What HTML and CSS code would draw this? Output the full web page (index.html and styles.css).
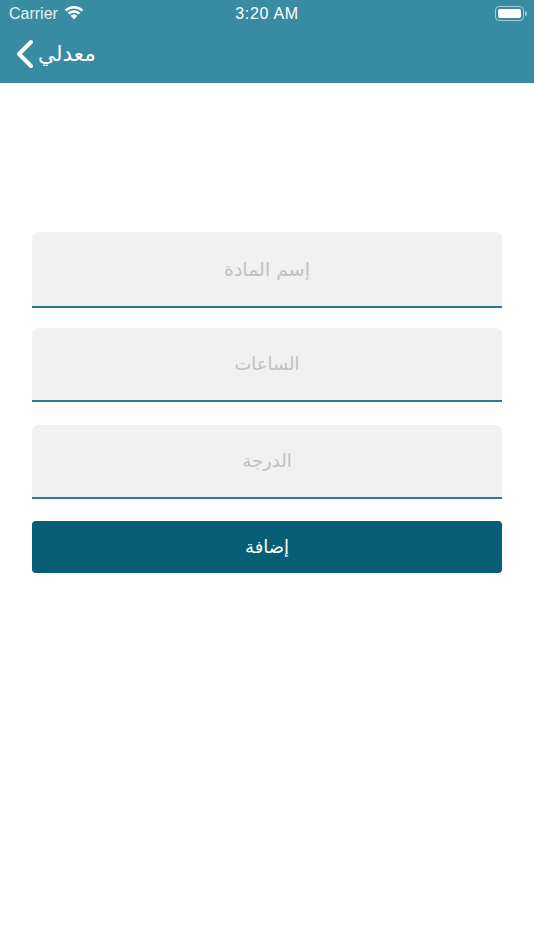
FILE: index.html
```html
<!DOCTYPE html>
<html lang="ar">
<head>
    <meta charset="UTF-8">
    <meta name="viewport" content="width=device-width, initial-scale=1.0">
    <title>معدلي</title>
    <link rel="stylesheet" href="styles.css">
</head>
<body>
    <div class="top-bar">
        <div class="status-bar">
            <div class="status-left">
                <span class="carrier">Carrier</span>
                <svg class="wifi" width="20" height="15" viewBox="0 0 20 15">
                    <path d="M10 14.5 L6.6 10.8 A5 5 0 0 1 13.4 10.8 Z" fill="#fff"/>
                    <path d="M4.6 8.6 A8 8 0 0 1 15.4 8.6 M1.6 5.7 A12 12 0 0 1 18.4 5.7" fill="none" stroke="#fff" stroke-width="2.4"/>
                </svg>
            </div>
            <div class="status-time">3:20 AM</div>
            <div class="status-right">
                <div class="battery"><div class="battery-level"></div></div>
                <div class="battery-tip"></div>
            </div>
        </div>
        <div class="nav-bar">
            <svg class="back-icon" width="20" height="30" viewBox="0 0 20 30">
                <path d="M16 3 L4 15 L16 27" fill="none" stroke="#fff" stroke-width="4" stroke-linecap="round" stroke-linejoin="round"/>
            </svg>
            <span class="nav-title">معدلي</span>
        </div>
    </div>
    <form class="grade-form">
        <input class="field field-name" type="text" placeholder="إسم المادة">
        <input class="field field-hours" type="text" placeholder="الساعات">
        <input class="field field-grade" type="text" placeholder="الدرجة">
        <button class="add-button" type="button">إضافة</button>
    </form>
</body>
</html>
```
FILE: styles.css
```css
body{
    margin: 0;
    background-color: white;
    font-family: "DejaVu Sans", sans-serif;
}
.top-bar{
    height: 83px;
    background-color: #388ba0;
    color: white;
}
.status-bar{
    display: flex;
    justify-content: space-between;
    align-items: center;
    height: 27px;
    padding: 0 7px 0 9px;
    font-family: "Liberation Sans", sans-serif;
    font-size: 16px;
}
.status-left, .status-right{
    display: flex;
    align-items: center;
    width: 100px;
}
.status-right{
    justify-content: flex-end;
}
.carrier{
    color: #e6f0f3;
}
.wifi{
    margin-left: 6px;
    margin-bottom: 2px;
}
.status-time{
    margin-left: -2px;
    font-weight: 500;
    letter-spacing: 0.7px;
}
.battery{
    box-sizing: border-box;
    width: 29px;
    height: 15px;
    padding: 2px;
    border: 1px solid #a5cdd6;
    border-radius: 4px;
}
.battery-level{
    height: 100%;
    background-color: white;
    border-radius: 2px;
}
.battery-tip{
    width: 2px;
    height: 5px;
    margin-left: 1px;
    background-color: #a5cdd6;
    border-radius: 0 2px 2px 0;
}
.nav-bar{
    display: flex;
    align-items: center;
    height: 54px;
    padding-left: 15px;
}
.nav-title{
    margin-left: 3px;
    padding-bottom: 1px;
    font-size: 21.5px;
}
.grade-form{
    display: flex;
    flex-direction: column;
    padding: 149px 32px 0;
}
.field{
    box-sizing: border-box;
    width: 100%;
    padding: 0 0 1px;
    border: 0;
    border-bottom: 2px solid #2b7c92;
    border-radius: 6px 6px 0 0;
    background-color: #f1f1f1;
    font-family: "DejaVu Sans", sans-serif;
    font-size: 18px;
    text-align: center;
}
.field::placeholder{
    color: #c0c0c0;
    opacity: 1;
}
.field-name{
    height: 76px;
    margin-bottom: 20px;
    font-size: 19px;
}
.field-hours{
    height: 74px;
    margin-bottom: 23px;
}
.field-grade{
    height: 74px;
    margin-bottom: 22px;
}
.add-button{
    height: 52px;
    padding: 0 0 2px;
    border: 0;
    border-radius: 4px;
    background-color: #055e73;
    color: white;
    font-family: "DejaVu Sans", sans-serif;
    font-size: 18px;
}
```
